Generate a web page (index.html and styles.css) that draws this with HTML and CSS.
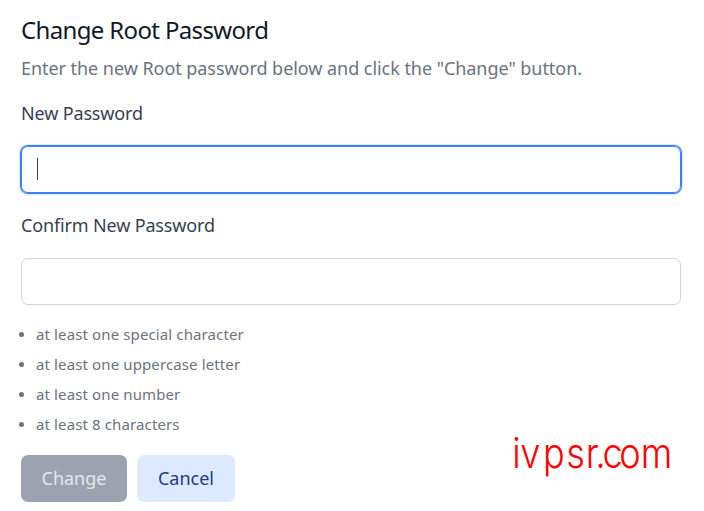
FILE: index.html
```html
<!DOCTYPE html>
<html lang="en">
<head>
<meta charset="utf-8">
<title>Change Root Password</title>
<link rel="stylesheet" href="styles.css">
</head>
<body>
<main class="panel">
  <h1 class="title">Change Root Password</h1>
  <p class="intro">Enter the new Root password below and click the "Change" button.</p>
  <form class="form">
    <label class="label" for="pw">New Password</label>
    <div class="field field-focused" id="pw"><span class="caret"></span></div>
    <label class="label label-confirm" for="confirm">Confirm New Password</label>
    <div class="field" id="confirm"></div>
    <ul class="rules">
      <li class="rule">at least one special character</li>
      <li class="rule">at least one uppercase letter</li>
      <li class="rule">at least one number</li>
      <li class="rule">at least 8 characters</li>
    </ul>
    <div class="actions">
      <button class="button button-change" type="button" disabled>Change</button>
      <button class="button button-cancel" type="button">Cancel</button>
    </div>
  </form>
</main>
<svg class="watermark" width="190" height="66" viewBox="0 0 190 66">
  <text transform="translate(0 43) scale(.86 1)" y="0" x="2.5 12 38.5 65.5 88 99.5 107.5 127 152">ivpsr.com</text>
</svg>
</body>
</html>
```
FILE: styles.css
```css
* { box-sizing: border-box; }
body {
  margin: 0;
  background: #fff;
  font-family: "Noto Sans", "Open Sans", sans-serif;
  color: #374151;
}
.panel { width: 704px; height: 511px; padding: 14px 23px 0 21px; overflow: hidden; }
.title {
  margin: 0;
  font-size: 24px;
  line-height: 32px;
  font-weight: 400;
  letter-spacing: -0.65px;
  color: #111827;
}
.intro { margin: 8px 0 0; font-size: 18px; line-height: 28px; letter-spacing: -0.05px; color: #6b7280; white-space: nowrap; }
.form { margin: 17px 0 0; }
.label { display: block; font-size: 18px; line-height: 28px; letter-spacing: -0.15px; }
.label-confirm { margin-top: 18px; }
.field {
  display: flex;
  align-items: center;
  height: 47px;
  margin-top: 19px;
  padding: 0 15px;
  border: 1px solid #d1d5db;
  border-radius: 7px;
  box-shadow: 0 1px 2px rgba(0, 0, 0, .05);
}
.field-focused { border-color: #3b82f6; box-shadow: 0 0 0 1px #3b82f6, 0 0 1px 2px #dbeafe; }
.caret { width: 1px; height: 22px; margin-bottom: 2px; background: #374151; }
.rules { margin: 14px 0 0; padding: 0 0 0 15px; font-size: 15px; line-height: 30px; letter-spacing: .12px; color: #6b7280; list-style: none; }
.rule { display: flex; align-items: center; }
.rule::before { content: ""; width: 5px; height: 5px; margin: 1px 12px 0 -17px; border-radius: 50%; background: #6b7280; }
.actions { display: flex; gap: 10px; margin-top: 16px; }
.button { height: 47px; padding: 0 0 2px; border: 0; border-radius: 7px; font: 18px/28px "Noto Sans", sans-serif; }
.button-change { width: 106px; background: #9ca3af; color: #e5e7eb; }
.button-cancel { width: 98px; background: #dbeafe; color: #1e3a8a; }
.watermark { position: absolute; left: 510px; top: 425px; }
.watermark text { font-family: Inter, sans-serif; font-size: 42px; font-weight: 300; fill: #f00; }
```
